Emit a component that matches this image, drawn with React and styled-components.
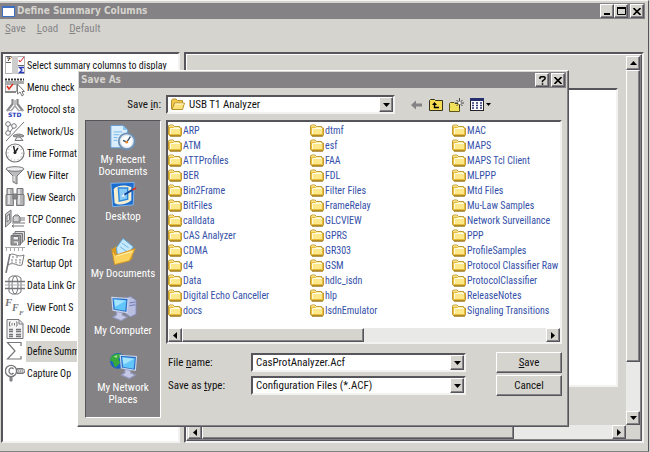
import styled, { createGlobalStyle, css } from 'styled-components';

const colors = {
  face: '#d6d4ce',
  title: '#848284',
  dark: '#55555b',
  shadow: '#848284',
  light: '#ffffff',
  track: '#e9e9e7',
  file: '#3450a8',
  disabled: '#85858a',
};

const narrow = '"Roboto Condensed", Roboto, sans-serif';
const wide = '"DejaVu Sans Condensed", "DejaVu Sans", sans-serif';

const raised = css`
  border: 1px solid;
  border-color: ${colors.light} ${colors.dark} ${colors.dark} ${colors.light};
  box-shadow: inset -1px -1px 0 ${colors.shadow};
`;

const sunken = css`
  border: 2px solid;
  border-color: ${colors.dark} #f2f2f0 #f2f2f0 ${colors.dark};
`;

const GlobalStyle = createGlobalStyle`
  * {
    box-sizing: border-box;
  }

  body {
    margin: 0;
    background: ${colors.face};
    font-family: ${narrow};
    font-size: 10px;
    color: #111;
  }

  svg {
    flex: none;
  }

  button, input, select {
    margin: 0;
    padding: 0;
    border: 0;
    border-radius: 0;
    font: inherit;
    color: inherit;
    outline: 0;
  }
`;

const Window = styled.div`
  position: relative;
  display: flex;
  flex-direction: column;
  min-height: 100vh;
  margin-right: 1px;
  padding-top: 2px;
  background: ${colors.face};
  border-top: 1px solid #f4f4f2;
  border-right: 1px solid ${colors.dark};
  border-bottom: 1px solid ${colors.shadow};
`;

const TitleBar = styled.header`
  display: flex;
  align-items: center;
  gap: 2px;
  height: 16px;
  margin-right: 3px;
  padding: 0 1px 0 2px;
  background: ${colors.title};
`;

const Title = styled.h1`
  flex: 1;
  margin: 0;
  font-family: ${wide};
  font-size: 10px;
  line-height: 16px;
  font-weight: bold;
  white-space: nowrap;
  color: ${colors.face};
`;

const CaptionButtons = styled.div`
  display: flex;
  gap: ${({ $gap }) => $gap || 0}px;
`;

const SquareButton = styled.button`
  ${raised}
  display: flex;
  flex: none;
  align-items: center;
  justify-content: center;
  width: 14px;
  height: 14px;
  background: ${colors.face};
`;

const MenuBar = styled.nav`
  display: flex;
  gap: 11px;
  height: 33px;
  padding-left: 5px;
  font-size: 11px;
`;

const MenuButton = styled.button`
  height: 18px;
  background: none;
  color: ${colors.disabled};
`;

const Panes = styled.main`
  display: grid;
  grid-template-columns: 179px 1fr;
  gap: 4px;
  flex: 1;
  padding: 0 4px 8px 1px;
`;

const OptionList = styled.ul`
  ${sunken}
  margin: 0;
  padding: 0 0 0 2px;
  list-style: none;
  background: #fff;
  overflow: hidden;
`;

const Option = styled.li`
  display: flex;
  align-items: center;
  gap: 1px;
  height: 22px;
`;

const OptionLabel = styled.span`
  flex: 1;
  padding-left: 1px;
  line-height: 21px;
  white-space: nowrap;
  background: ${({ $selected }) => ($selected ? colors.face : 'none')};
`;

const DisplayPane = styled.section`
  ${sunken}
  display: flex;
`;

const PaneFrame = styled.div`
  ${raised}
  flex: 1;
  display: grid;
  grid-template-columns: 1fr 14px;
  grid-template-rows: 1fr 14px;
  padding: 1px;
`;

const BlankPage = styled.div`
  ${sunken}
  margin: 32px 8px 38px 4px;
  background: #fff;
`;

const Scroll = styled.div`
  display: flex;
  flex-direction: ${({ $vertical }) => ($vertical ? 'column' : 'row')};
  background: ${colors.track};
`;

const Thumb = styled.div`
  ${raised}
  flex: 0 0 ${({ $size }) => $size};
  background: ${colors.face};
`;

const Spacer = styled.div`
  flex: 1;
`;

const Dialog = styled.section`
  ${raised}
  position: absolute;
  top: 69px;
  left: 77px;
  right: 79px;
  padding: 1px;
  background: ${colors.face};
  font-size: 11px;
`;

const DialogTitleBar = styled(TitleBar)`
  margin: 0 1px 0 0;
`;

const DialogBody = styled.form`
  display: grid;
  grid-template-columns: 76px 1fr;
  gap: 6px 5px;
  padding: 7px 5px 7px 6px;
`;

const Label = styled.label`
  line-height: 19px;
  white-space: nowrap;
  padding-left: 2px;
`;

const LookLabel = styled(Label)`
  text-align: right;
`;

const LookRow = styled.div`
  display: flex;
  align-items: center;
`;

const Combo = styled.div`
  ${sunken}
  flex: 1;
  display: flex;
  align-items: center;
  min-width: 0;
  height: 19px;
  padding-left: 3px;
  background: #fff;
`;

const ComboSelect = styled.select`
  flex: 1;
  min-width: 0;
  height: 15px;
  padding-left: ${({ $indent }) => $indent || 0}px;
  appearance: none;
  background: transparent;
`;

const ComboInput = styled.input`
  flex: 1;
  min-width: 0;
  height: 15px;
  background: transparent;
`;

const DropButton = styled(SquareButton)`
  height: 15px;
`;

const Tools = styled.div`
  display: flex;
  align-items: center;
  gap: 6px;
  width: 167px;
  padding-left: 15px;
`;

const ToolButton = styled.button`
  display: flex;
  background: none;
`;

const Places = styled.nav`
  padding: 3px 0 8px;
  border: 1px solid;
  border-color: ${colors.dark} ${colors.light} ${colors.light} ${colors.dark};
  background: ${colors.title};
`;

const Place = styled.button`
  display: flex;
  flex-direction: column;
  align-items: center;
  gap: 2px;
  width: 100%;
  height: 57px;
  background: none;
  color: #fff;
  line-height: 12px;
`;

const Browser = styled.div`
  display: flex;
  flex-direction: column;
  min-width: 0;
`;

const FileBox = styled.div`
  ${sunken}
  background: #fff;
`;

const FileGrid = styled.ul`
  display: grid;
  grid-template-rows: repeat(13, 15px);
  grid-auto-flow: column;
  grid-auto-columns: 142px;
  margin: 0;
  padding: 1px 0 10px;
  list-style: none;
  overflow: hidden;
`;

const File = styled.li`
  display: flex;
  align-items: center;
  gap: 1px;
  font-size: 10px;
  line-height: 15px;
  white-space: nowrap;
  color: ${colors.file};
`;

const Fields = styled.div`
  display: grid;
  grid-template-columns: 85px 1fr 66px;
  grid-auto-rows: 21px;
  row-gap: 2px;
  align-items: center;
  margin-top: 8px;
`;

const PushButton = styled.button`
  ${raised}
  height: 21px;
  background: ${colors.face};
`;

const ComboCell = styled.div`
  display: flex;
  padding-right: 30px;
`;

const arrowPoints = {
  up: '0,4 7,4 3.5,0',
  down: '0,0 7,0 3.5,4',
  left: '4,0 4,7 0,3.5',
  right: '0,0 0,7 4,3.5',
};

const Arrow = ({ to }) => {
  const tall = to === 'left' || to === 'right';
  const w = tall ? 4 : 7;
  const h = tall ? 7 : 4;

  return (
    <svg width={w} height={h} viewBox={`0 0 ${w} ${h}`}>
      <polygon points={arrowPoints[to]} fill='#000' />
    </svg>
  );
};

const CloseGlyph = () => (
  <svg width='8' height='7' viewBox='0 0 8 7'>
    <path d='M0.5 0L7.5 7M7.5 0L0.5 7' stroke='#000' strokeWidth='1.6' />
  </svg>
);

const ScrollBar = ({ vertical, size }) => (
  <Scroll $vertical={vertical}>
    <SquareButton type='button' aria-label={vertical ? 'Scroll up' : 'Scroll left'}>
      <Arrow to={vertical ? 'up' : 'left'} />
    </SquareButton>
    <Thumb $size={size} />
    <Spacer />
    <SquareButton type='button' aria-label={vertical ? 'Scroll down' : 'Scroll right'}>
      <Arrow to={vertical ? 'down' : 'right'} />
    </SquareButton>
  </Scroll>
);

const FolderIcon = () => (
  <svg width='14' height='13' viewBox='0 0 14 13'>
    <path d='M0.5 10.5V2L1.5 1H5L6.5 2.5H11.5L12 4H13.5V11L12.5 12H2Z' fill='#e8bd3c' stroke='#c09a34' />
    <path d='M1.5 3L2 2H5L6 3.5H11' fill='none' stroke='#fff3b0' />
    <path d='M3 5H12V10H3Z' fill='#fde98c' />
    <path d='M2.5 10V4.5H12' fill='none' stroke='#fffbe0' />
    <path d='M2 12H13' stroke='#8f6c14' />
  </svg>
);

const OpenFolderIcon = () => (
  <svg width='14' height='13' viewBox='0 0 14 13'>
    <path d='M0.5 11V2.5L1.5 1H5L6.5 2.5H11.5V5' fill='#f0c850' stroke='#b8922a' />
    <path d='M1 11.5L3.5 5H13.5L11.5 11.5Z' fill='#fde27a' stroke='#b8922a' />
    <path d='M4 6H12.5' stroke='#fffbe0' />
  </svg>
);

const WindowIcon = () => (
  <svg width='13' height='11' viewBox='0 0 13 11'>
    <rect x='0.5' y='0.5' width='12' height='10' fill='#fff' stroke='#3d6fc4' />
    <path d='M0 1H13' stroke='#3d6fc4' strokeWidth='2' />
  </svg>
);

const ink = { fill: 'none', stroke: '#77777b', strokeWidth: 1 };

const optionIcons = {
  columns: (
    <>
      <rect x='0.5' y='1.5' width='19' height='17' fill='#fff' stroke='#b0b0b0' />
      <rect x='7' y='1' width='6' height='18' fill='#cdcdcd' />
      <path d='M1 1.5H6M1 7.5H6M13 10.5H19' stroke='#666' />
      <path d='M2 3H5L3 6' fill='none' stroke='#333' />
      <path d='M4 5L7 2' stroke='#c84' />
      <path d='M14 5L15 7L19 2' fill='none' stroke='#d22' />
      <path d='M19 12.5H14.5L17 15L14.5 17.5H19' fill='none' stroke='#2438b8' strokeWidth='1.3' />
    </>
  ),
  menu: (
    <>
      <path d='M0 2.5H19' stroke='#333' strokeWidth='2' strokeDasharray='2 1' />
      <rect x='0' y='4' width='19' height='3' fill='#aaa' />
      <rect x='0.5' y='7.5' width='11' height='7' fill='#f4f4f4' stroke='#aaa' />
      <path d='M2 9L4 12L8 7' fill='none' stroke='#e0301c' strokeWidth='1.5' />
      <rect x='0' y='14' width='11' height='2' fill='#888' />
      <path d='M12.5 7V17L15 15L17 19L18.5 18L17 14.5H19.5Z' fill='#fff' stroke='#777' />
    </>
  ),
  std: (
    <>
      <path d='M7.5 0V5L2 12M12.5 0V5L18 12' fill='none' stroke='#8a8a8e' strokeWidth='2.2' />
      <path d='M10 1V7L6 12M10 7L14 12' fill='none' stroke='#a2a2a6' strokeWidth='1.4' />
      <path d='M1 11.5H7M13 11.5H19' stroke='#aaa' />
      <text x='3' y='18' fontFamily='DejaVu Sans' fontSize='6' fontWeight='bold' fill='#2438b8'>STD</text>
    </>
  ),
  network: (
    <g {...ink}>
      <circle cx='3' cy='3' r='2.3' />
      <circle cx='9' cy='5' r='2.3' />
      <circle cx='3' cy='12' r='2.3' />
      <path d='M5 3.5L7 4.5M3 5V10M5 11L8 7M1 20L19 1' />
      <path d='M8 15C10 12.5 17 12.5 19 15L17 16L15 15H12L10 16Z' fill='#aaa' />
      <path d='M10 19.5L12 16H15L18 19.5Z' fill='#eee' />
    </g>
  ),
  clock: (
    <>
      <circle cx='10' cy='10' r='9' fill='#fff' stroke='#777' strokeWidth='1.2' />
      <circle cx='10' cy='10' r='7' fill='none' stroke='#999' strokeDasharray='1 2.6' />
      <path d='M8.5 3L10 9.5L13 5' fill='none' stroke='#222' strokeWidth='1.4' />
      <circle cx='10' cy='9.5' r='1.5' fill='#222' />
    </>
  ),
  filter: (
    <g {...ink}>
      <path d='M1 4L8 11V17L12 19V11L19 4Z' fill='#bdbdbf' />
      <ellipse cx='10' cy='4' rx='9' ry='2.3' fill='#ececec' />
      <path d='M9 11V16' stroke='#fff' />
    </g>
  ),
  search: (
    <g {...ink}>
      <path d='M2 1.5H8V7L8.5 18.5H1V8L2 7Z' fill='#b5b5b8' />
      <path d='M12 1.5H18V7L19 8V18.5H11.5L12 7Z' fill='#b5b5b8' />
      <path d='M8 7H12V12H8Z' fill='#888' />
      <path d='M4 2V17M14 2V17' stroke='#eee' strokeWidth='1.5' />
      <path d='M1 7.5H8M12 7.5H19' />
    </g>
  ),
  tcp: (
    <g {...ink}>
      <path d='M0.5 5L6 1V13L0.5 18Z' fill='#c8c8ca' />
      <path d='M2 7L4.5 5V11L2 13Z' fill='#eee' />
      <path d='M8 13V8L10 6H13L15 8V13Z' fill='#bbb' />
      <path d='M10 8V12M12 8V12' stroke='#eee' />
      <path d='M15 9H20M15 11H20M7 14H20M7 17H19M7 17L9 15.5M7 17L9 18.5' />
    </g>
  ),
  periodic: (
    <g {...ink}>
      <path d='M10 0.5H19.5V9L17.5 11H10Z' fill='#ddd' />
      <path d='M8 2.5H17.5V11L15.5 13H8Z' fill='#bbb' />
      <path d='M6 4.5H15.5V14H6Z' fill='#999' />
      <path d='M8 5.5H13.5V9H8Z' fill='#eee' />
      <path d='M9 11H12.5V14' stroke='#fff' />
      <path d='M0 16.5H20M1.5 17V20M5.5 17V20M9.5 17V20M13.5 17V20M17.5 17V20' stroke='#aaa' />
    </g>
  ),
  startup: (
    <g {...ink}>
      <path d='M5 1L1 20' strokeWidth='1.6' />
      <path d='M5 2C9 -1 12 5 19 2L17 12C12 14 9 8 3 12Z' fill='#fff' />
      <path d='M7 4H15M6 7H16M6 9.5H16' strokeDasharray='2 2' strokeWidth='2' stroke='#bbb' />
    </g>
  ),
  link: (
    <g {...ink}>
      <path d='M4 3L7 1H13L16 3V17L13 19H7L4 17Z' />
      <ellipse cx='10' cy='10' rx='3' ry='9' />
      <path d='M0 6.5H20M0 13.5H20' strokeWidth='1.6' />
      <path d='M0 10H20' stroke='#aaa' />
    </g>
  ),
  font: (
    <g fontFamily='Liberation Serif' fontStyle='italic' fontWeight='bold' fill='#77777b'>
      <text x='0' y='9' fontSize='11'>F</text>
      <text x='7' y='14' fontSize='10'>F</text>
      <text x='14' y='18' fontSize='7'>F</text>
    </g>
  ),
  ini: (
    <g {...ink}>
      <path d='M2 0.5H14L18 4.5V19.5H2Z' fill='#f4f4f4' />
      <path d='M14 1V5H18' />
      <path d='M5.5 3H4.5V7H5.5M11 3H12V7H11M7 4V6.5M9.5 4V6.5' />
      <path d='M4 10.5H8M11 10.5H16M4 12.5H8M11 12.5H16M4 15.5H8M11 15.5H16M4 17.5H8M11 17.5H16' strokeWidth='1.4' />
    </g>
  ),
  sigma: <path d='M16 5V1.5H2.5L10 10L2.5 18H16V15' {...ink} strokeWidth='1.2' />,
  capture: (
    <g {...ink}>
      <circle cx='6' cy='8' r='5.6' strokeWidth='1.4' />
      <path d='M8.5 6C7 4 4 5 4 8C4 11 7 12 8.5 10' strokeWidth='1.3' />
      <path d='M12 5.5H18L20 7.5V9L18 10.5H12Z' fill='#aaa' />
      <path d='M12 8H20' stroke='#fff' strokeDasharray='1 1' />
      <path d='M5 14H7V18H5Z' fill='#999' />
    </g>
  ),
};

const Screen = ({ x, y }) => (
  <g transform={`translate(${x} ${y}) scale(1.25)`}>
    <path d='M4 12L9 13V15L13 17L8 20L1 17L4 15Z' fill='#c4c8e4' stroke='#9298c0' />
    <path d='M0 0L14 1L13 13L1 11Z' fill='#2b6cc4' stroke='#c9d6ee' />
    <path d='M1.5 1.5L12.5 2.5L11.5 11.5L2.5 10Z' fill='#62c6f8' />
    <path d='M2 2L12 3L3 8Z' fill='#a5e4ff' />
  </g>
);

const placeIcons = {
  recent: (
    <>
      <path d='M2 1H15L20 6V25H2Z' fill='#d9edfc' stroke='#5b9bd8' />
      <path d='M15 1V6H20' fill='#8cc4f0' />
      <path d='M5 8H14M5 11H11M5 14H9M5 17H9' stroke='#74b4e4' />
      <circle cx='19' cy='18' r='8.5' fill='#dbe7f0' stroke='#6e90b4' strokeWidth='2' />
      <circle cx='19' cy='18' r='6' fill='#fff' />
      <path d='M19 19L23 13M19 19L15 17' stroke='#33506e' strokeWidth='1.4' />
      <circle cx='19' cy='19' r='1.5' fill='#e58a2c' />
    </>
  ),
  desktop: (
    <>
      <path d='M2 2L27 1L26 25L4 27Z' fill='#1c6cd0' stroke='#82b8ef' />
      <path d='M5 8C8 4 18 3 24 6V20C18 25 10 26 6 23Z' fill='#f5efd0' />
      <path d='M10 7H20V19L11 21Z' fill='#8acbf6' stroke='#2a88dc' strokeWidth='1.5' />
      <path d='M15 15L25 9' stroke='#14479a' strokeWidth='2' />
      <path d='M25 9L29 7' stroke='#d8321c' strokeWidth='2' />
      <path d='M13 16L16 13L17 16Z' fill='#fff' />
    </>
  ),
  documents: (
    <>
      <path d='M4 11L8 8L25 11V22L6 26Z' fill='#d99b1e' />
      <path d='M8 10L15 0L26 9L19 19L9 18Z' fill='#c6e8fc' stroke='#5aa7dd' />
      <path d='M12 9L19 14M14 5L21 10' stroke='#68b4e8' />
      <path d='M3 11L7 18L28 11L22 24L6 28Z' fill='#fbd25c' stroke='#d8961c' />
      <path d='M7 19L25 14' stroke='#fff2b8' />
    </>
  ),
  computer: (
    <>
      <path d='M17 3L23 1L29 5V20L23 23L17 19Z' fill='#b8bee0' stroke='#8389b4' />
      <path d='M22 8L28 7M22 11L28 10' stroke='#6b74b0' />
      <Screen x={3} y={2} />
    </>
  ),
  places: (
    <>
      <circle cx='9.5' cy='9' r='8.5' fill='#1c63c4' />
      <path d='M2 5C6 0 12 1 14 3L10 7L12 11L7 16C4 14 6 9 1 9Z' fill='#37a93c' />
      <path d='M5 4L9 3L8 6Z' fill='#a9e89a' />
      <Screen x={12} y={3} />
    </>
  ),
};

const options = [
  ['columns', 'Select summary columns to display'],
  ['menu', 'Menu check'],
  ['std', 'Protocol sta'],
  ['network', 'Network/Us'],
  ['clock', 'Time Format'],
  ['filter', 'View Filter'],
  ['search', 'View Search'],
  ['tcp', 'TCP Connec'],
  ['periodic', 'Periodic Tra'],
  ['startup', 'Startup Opt'],
  ['link', 'Data Link Gr'],
  ['font', 'View Font S'],
  ['ini', 'INI Decode'],
  ['sigma', 'Define Summ'],
  ['capture', 'Capture Op'],
];

const places = [
  ['recent', ['My Recent', 'Documents']],
  ['desktop', ['Desktop']],
  ['documents', ['My Documents']],
  ['computer', ['My Computer']],
  ['places', ['My Network', 'Places']],
];

const files = [
  'ARP', 'ATM', 'ATTProfiles', 'BER', 'Bin2Frame', 'BitFiles', 'calldata',
  'CAS Analyzer', 'CDMA', 'd4', 'Data', 'Digital Echo Canceller', 'docs',
  'dtmf', 'esf', 'FAA', 'FDL', 'Filter Files', 'FrameRelay', 'GLCVIEW',
  'GPRS', 'GR303', 'GSM', 'hdlc_isdn', 'hlp', 'IsdnEmulator',
  'MAC', 'MAPS', 'MAPS Tcl Client', 'MLPPP', 'Mtd Files', 'Mu-Law Samples',
  'Network Surveillance', 'PPP', 'ProfileSamples', 'Protocol Classifier Raw',
  'ProtocolClassifier', 'ReleaseNotes', 'Signaling Transitions',
];

const DialogTools = () => (
  <Tools>
    <ToolButton type='button' aria-label='Back'>
      <svg width='13' height='12' viewBox='0 0 13 12'>
        <path d='M1 6L6 1.5V4.5H12V7.5H6V10.5Z' fill='#848284' />
      </svg>
    </ToolButton>
    <ToolButton type='button' aria-label='Up one level'>
      <svg width='14' height='13' viewBox='0 0 14 13'>
        <path d='M0.5 12.5V2.5L1.5 1.5H5.5L6.5 2.5H13.5V12.5Z' fill='#f5dc50' stroke='#33331c' />
        <path d='M5.5 5V9.5H10' fill='none' stroke='#000' strokeWidth='1.4' />
        <path d='M3 7L5.5 4L8 7Z' fill='#000' />
      </svg>
    </ToolButton>
    <ToolButton type='button' aria-label='New folder'>
      <svg width='15' height='14' viewBox='0 0 15 14'>
        <path d='M0.5 13.5V5.5L1.5 4.5H5L6 5.5H10.5V13.5Z' fill='#f0e05a' stroke='#5c561c' />
        <path d='M10.5 0V10M6 5H15M7.5 2L13.5 8M13.5 2L7.5 8' stroke='#222' strokeWidth='0.8' />
        <circle cx='10.5' cy='5' r='1.4' fill='#fff' />
      </svg>
    </ToolButton>
    <ToolButton type='button' aria-label='Views'>
      <svg width='21' height='13' viewBox='0 0 21 13'>
        <rect x='0.5' y='0.5' width='13' height='12' fill='#fff' stroke='#222' />
        <path d='M0 1.5H14' stroke='#26306c' strokeWidth='3' />
        <path d='M2 5H12M2 7.5H12M2 10H12' stroke='#333c78' strokeWidth='1.4' strokeDasharray='2 2' />
        <polygon points='16,5 21,5 18.5,8' fill='#000' />
      </svg>
    </ToolButton>
  </Tools>
);

const SaveAsDialog = () => (
  <Dialog role='dialog' aria-labelledby='save-as-title'>
    <DialogTitleBar>
      <Title as='h2' id='save-as-title'>Save As</Title>
      <CaptionButtons $gap={2}>
        <SquareButton type='button' aria-label='Help'>
          <svg width='7' height='9' viewBox='0 0 7 9'>
            <path d='M1 3V1.5L2 0.8H5L6 1.5V3L3.5 5V6.3M3.5 7.3V8.8' fill='none' stroke='#000' strokeWidth='1.5' />
          </svg>
        </SquareButton>
        <SquareButton type='button' aria-label='Close'><CloseGlyph /></SquareButton>
      </CaptionButtons>
    </DialogTitleBar>
    <DialogBody onSubmit={(e) => e.preventDefault()}>
      <LookLabel htmlFor='save-in'>Save <u>i</u>n:</LookLabel>
      <LookRow>
        <Combo>
          <OpenFolderIcon />
          <ComboSelect id='save-in' $indent={4}>
            <option>USB T1 Analyzer</option>
          </ComboSelect>
          <DropButton as='span' aria-hidden='true'><Arrow to='down' /></DropButton>
        </Combo>
        <DialogTools />
      </LookRow>
      <Places>
        {places.map(([icon, lines]) => (
          <Place key={icon} type='button'>
            <svg width='28' height='28' viewBox='0 0 30 29'>{placeIcons[icon]}</svg>
            <span>
              {lines[0]}
              {lines[1] && <><br />{lines[1]}</>}
            </span>
          </Place>
        ))}
      </Places>
      <Browser>
        <FileBox>
          <FileGrid>
            {files.map((name) => (
              <File key={name}>
                <FolderIcon />
                {name}
              </File>
            ))}
          </FileGrid>
          <ScrollBar size='182px' />
        </FileBox>
        <Fields>
          <Label htmlFor='file-name'>File <u>n</u>ame:</Label>
          <ComboCell>
            <Combo>
              <ComboInput id='file-name' defaultValue='CasProtAnalyzer.Acf' />
              <DropButton type='button' aria-label='Recent names'><Arrow to='down' /></DropButton>
            </Combo>
          </ComboCell>
          <PushButton type='submit'><u>S</u>ave</PushButton>
          <Label htmlFor='file-type'>Save as <u>t</u>ype:</Label>
          <ComboCell>
            <Combo>
              <ComboSelect id='file-type'>
                <option>Configuration Files (*.ACF)</option>
              </ComboSelect>
              <DropButton as='span' aria-hidden='true'><Arrow to='down' /></DropButton>
            </Combo>
          </ComboCell>
          <PushButton type='button'>Cancel</PushButton>
        </Fields>
      </Browser>
    </DialogBody>
  </Dialog>
);

const App = () => {

  return (
    <Window>
      <GlobalStyle />
      <TitleBar>
        <WindowIcon />
        <Title>Define Summary Columns</Title>
        <CaptionButtons>
          <SquareButton type='button' aria-label='Minimize'>
            <svg width='7' height='7' viewBox='0 0 7 7'><path d='M0 6H6' stroke='#000' strokeWidth='2' /></svg>
          </SquareButton>
          <SquareButton type='button' aria-label='Maximize'>
            <svg width='9' height='8' viewBox='0 0 9 8'>
              <path d='M0.5 0V7.5H8.5V0' fill='none' stroke='#000' />
              <path d='M0 1H9' stroke='#000' strokeWidth='2' />
            </svg>
          </SquareButton>
        </CaptionButtons>
        <SquareButton type='button' aria-label='Close'><CloseGlyph /></SquareButton>
      </TitleBar>
      <MenuBar>
        <MenuButton type='button'><u>S</u>ave</MenuButton>
        <MenuButton type='button'><u>L</u>oad</MenuButton>
        <MenuButton type='button'><u>D</u>efault</MenuButton>
      </MenuBar>
      <Panes>
        <OptionList>
          {options.map(([icon, label]) => (
            <Option key={icon}>
              <svg width='20' height='20' viewBox='0 0 20 20'>{optionIcons[icon]}</svg>
              <OptionLabel $selected={icon === 'sigma'}>{label}</OptionLabel>
            </Option>
          ))}
        </OptionList>
        <DisplayPane>
          <PaneFrame>
            <BlankPage />
            <ScrollBar vertical size='292px' />
            <ScrollBar size='312px' />
          </PaneFrame>
        </DisplayPane>
      </Panes>
      <SaveAsDialog />
    </Window>
  );
};

export default App;
